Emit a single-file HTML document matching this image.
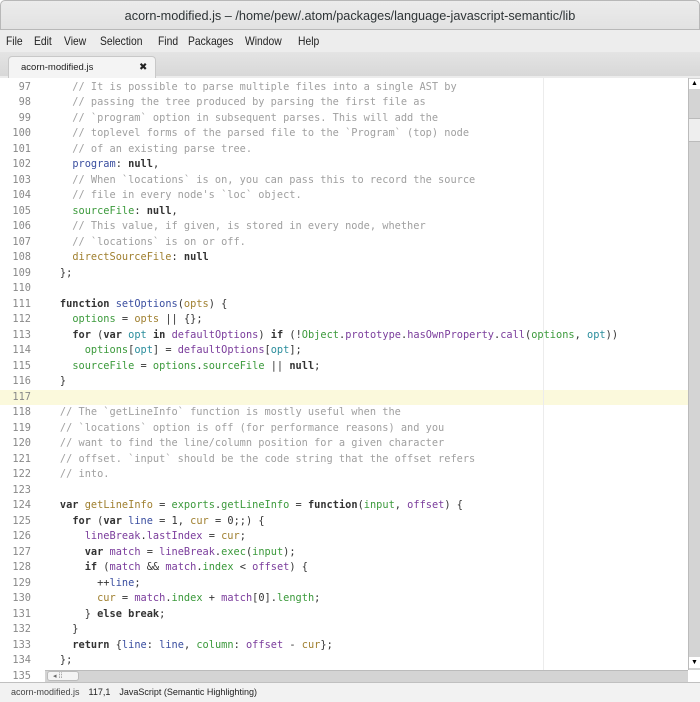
<!DOCTYPE html>
<html><head><meta charset="utf-8"><style>
body{margin:0;width:700px;height:702px;overflow:hidden;background:#fff;font-family:"Liberation Sans","DejaVu Sans",sans-serif;position:relative}
#title{position:absolute;left:0;top:0;width:700px;height:30px;background:linear-gradient(#ececec,#e2e2e2);border:1px solid #b8b8b8;box-sizing:border-box;border-radius:5px 5px 0 0;text-align:center;line-height:30px;font-size:12.7px;color:#2e3436}
#menu{position:absolute;left:0;top:30px;width:700px;height:22px;background:#ededed;font-size:12px;color:#222;line-height:22px;border-bottom:1px solid #c8c8c8}
#menu span{position:absolute;top:0;transform:scaleX(0.86);transform-origin:0 0}
#tabs{position:absolute;left:0;top:52px;width:700px;height:26px;background:linear-gradient(#e4e4e4,#d8d8d8);border-bottom:2px solid #ececec;box-sizing:border-box}
#tab{position:absolute;left:8px;top:4px;width:148px;height:22px;background:#f4f4f4;border:1px solid #c8c8c8;border-bottom:none;border-radius:4px 4px 0 0;font-size:9.5px;line-height:22px;color:#222;box-sizing:border-box}
#tab .n{position:absolute;left:12px}#tab .x{position:absolute;left:130px;font-size:10px;font-weight:bold}
#ed{position:absolute;left:0;top:78px;width:688px;height:604px;background:#fff;overflow:hidden}
#gut{position:absolute;left:0;top:1.5px;width:31px;text-align:right;font:10.3px/15.5px "DejaVu Sans Mono",monospace;color:#888}
#code{position:absolute;left:47.5px;top:1.5px;font:10.3px/15.5px "DejaVu Sans Mono",monospace;color:#333;white-space:pre}
#hl{position:absolute;left:0;top:311.5px;width:688px;height:15.5px;background:#fbf9dc}
#wrap{position:absolute;left:543px;top:0;width:1px;height:592px;background:#ececec}
.c{color:#a0a0a0}.k{color:#333;font-weight:bold}.b{color:#3b4fa0}.g{color:#3c9a3c}.o{color:#a08030}.p{color:#7b3d9c}.t{color:#2a8d9c}
#vs{position:absolute;left:688px;top:78px;width:12px;height:592px;background:#d4d4d4;border-left:1px solid #bbb;box-sizing:border-box}
#hs{position:absolute;left:45px;top:670px;width:643px;height:12px;background:#d4d4d4;border-top:1px solid #bbb;box-sizing:border-box}
#status{position:absolute;left:0;top:682px;width:700px;height:20px;background:#f2f2f2;border-top:1px solid #c0c0c0;box-sizing:border-box;font-size:9px;line-height:18px;color:#222}
</style></head><body>
<div id="title">acorn-modified.js – /home/pew/.atom/packages/language-javascript-semantic/lib</div>
<div id="menu"><span style="left:6px">File</span><span style="left:34px">Edit</span><span style="left:64px">View</span><span style="left:100px">Selection</span><span style="left:158px">Find</span><span style="left:188px">Packages</span><span style="left:245px">Window</span><span style="left:298px">Help</span></div>
<div id="tabs"><div id="tab"><span class="n">acorn-modified.js</span><span class="x">✖</span></div></div>
<div id="ed">
<div id="hl"></div><div id="wrap"></div>
<div id="gut">97<br>98<br>99<br>100<br>101<br>102<br>103<br>104<br>105<br>106<br>107<br>108<br>109<br>110<br>111<br>112<br>113<br>114<br>115<br>116<br>117<br>118<br>119<br>120<br>121<br>122<br>123<br>124<br>125<br>126<br>127<br>128<br>129<br>130<br>131<br>132<br>133<br>134<br>135</div>
<div id="code"><span class="c">    // It is possible to parse multiple files into a single AST by
    // passing the tree produced by parsing the first file as
    // `program` option in subsequent parses. This will add the
    // toplevel forms of the parsed file to the `Program` (top) node
    // of an existing parse tree.</span>
    <span class="b">program</span>: <span class="k">null</span>,
<span class="c">    // When `locations` is on, you can pass this to record the source
    // file in every node's `loc` object.</span>
    <span class="g">sourceFile</span>: <span class="k">null</span>,
<span class="c">    // This value, if given, is stored in every node, whether
    // `locations` is on or off.</span>
    <span class="o">directSourceFile</span>: <span class="k">null</span>
  };

  <span class="k">function</span> <span class="b">setOptions</span>(<span class="o">opts</span>) {
    <span class="g">options</span> = <span class="o">opts</span> || {};
    <span class="k">for</span> (<span class="k">var</span> <span class="t">opt</span> <span class="k">in</span> <span class="p">defaultOptions</span>) <span class="k">if</span> (!<span class="g">Object</span>.<span class="p">prototype</span>.<span class="p">hasOwnProperty</span>.<span class="p">call</span>(<span class="g">options</span>, <span class="t">opt</span>))
      <span class="g">options</span>[<span class="t">opt</span>] = <span class="p">defaultOptions</span>[<span class="t">opt</span>];
    <span class="g">sourceFile</span> = <span class="g">options</span>.<span class="g">sourceFile</span> || <span class="k">null</span>;
  }

<span class="c">  // The `getLineInfo` function is mostly useful when the
  // `locations` option is off (for performance reasons) and you
  // want to find the line/column position for a given character
  // offset. `input` should be the code string that the offset refers
  // into.</span>

  <span class="k">var</span> <span class="o">getLineInfo</span> = <span class="g">exports</span>.<span class="g">getLineInfo</span> = <span class="k">function</span>(<span class="g">input</span>, <span class="p">offset</span>) {
    <span class="k">for</span> (<span class="k">var</span> <span class="b">line</span> = 1, <span class="o">cur</span> = 0;;) {
      <span class="p">lineBreak</span>.<span class="p">lastIndex</span> = <span class="o">cur</span>;
      <span class="k">var</span> <span class="p">match</span> = <span class="p">lineBreak</span>.<span class="g">exec</span>(<span class="g">input</span>);
      <span class="k">if</span> (<span class="p">match</span> &amp;&amp; <span class="p">match</span>.<span class="g">index</span> &lt; <span class="p">offset</span>) {
        ++<span class="b">line</span>;
        <span class="o">cur</span> = <span class="p">match</span>.<span class="g">index</span> + <span class="p">match</span>[0].<span class="g">length</span>;
      } <span class="k">else</span> <span class="k">break</span>;
    }
    <span class="k">return</span> {<span class="b">line</span>: <span class="b">line</span>, <span class="g">column</span>: <span class="p">offset</span> - <span class="o">cur</span>};
  };
</div>
</div>
<div id="vs">
<div style="position:absolute;left:0;top:1px;width:11px;height:10px;background:#fff;font-size:7px;text-align:center;line-height:10px">▲</div>
<div style="position:absolute;left:0;top:40px;width:11px;height:22px;background:#eee;border-top:1px solid #bbb;border-bottom:1px solid #bbb"></div>
<div style="position:absolute;left:0;top:579px;width:11px;height:11px;background:#fff;font-size:7px;text-align:center;line-height:11px">▼</div>
</div>
<div id="hs"><div style="position:absolute;left:2px;top:0;width:32px;height:10px;background:#f4f4f4;border:1px solid #bbb;border-radius:3px;box-sizing:border-box;font-size:7px;line-height:9px;color:#666;padding-left:5px">◂ ⁞⁞</div></div>
<div style="position:absolute;left:688px;top:670px;width:12px;height:12px;background:#fff"></div>
<div id="status"><span style="margin-left:11px;color:#444">acorn-modified.js</span><span style="margin-left:9px">117,1</span><span style="margin-left:9px">JavaScript (Semantic Highlighting)</span></div>
</body></html>
